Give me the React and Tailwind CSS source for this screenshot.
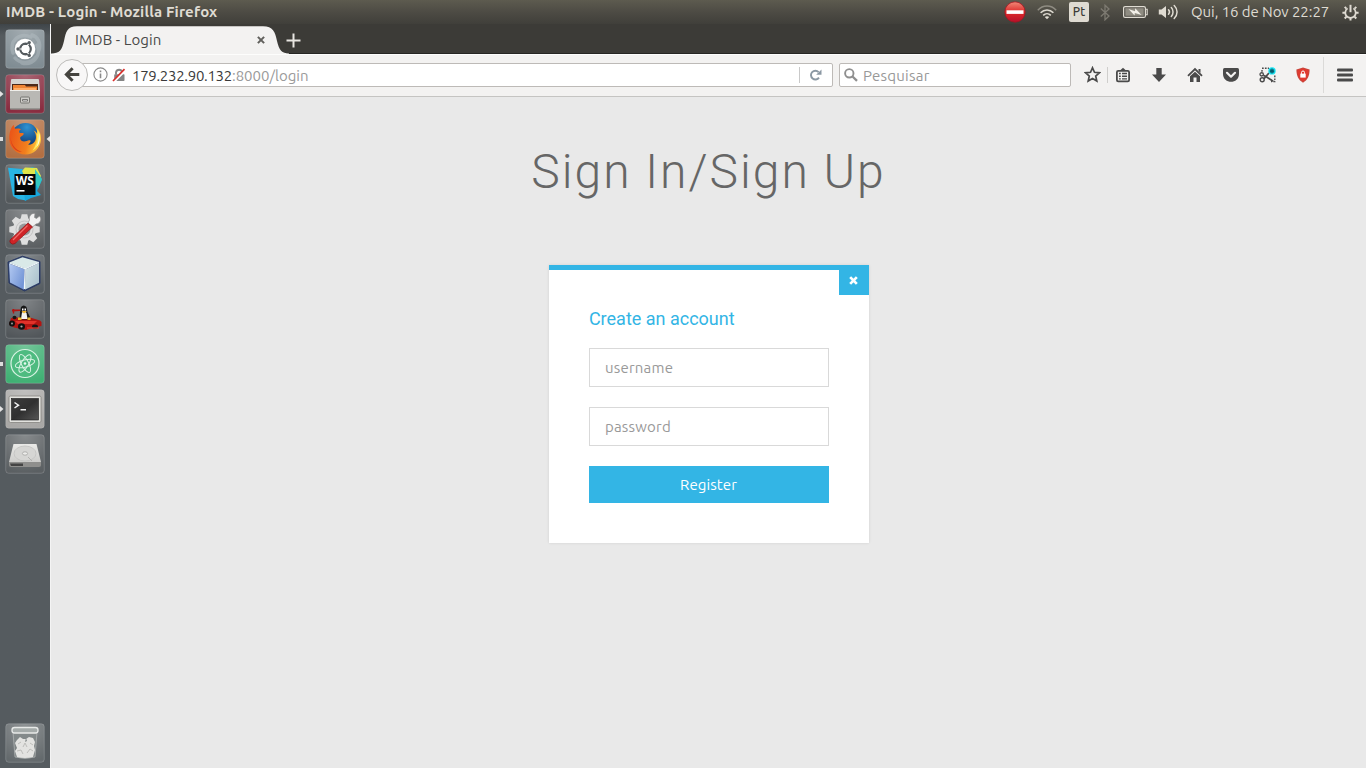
import React from "react";

const UI = "font-['Ubuntu','Noto_Sans',sans-serif]";

/* ---------- Top panel ---------- */

function NoEntryIcon() {
  return (
    <svg width="22" height="22" viewBox="0 0 22 22">
      <defs>
        <linearGradient id="ne" x1="0" y1="0" x2="0" y2="1">
          <stop offset="0" stopColor="#f08a78" />
          <stop offset="0.5" stopColor="#dd2a2a" />
          <stop offset="1" stopColor="#b80f2a" />
        </linearGradient>
      </defs>
      <circle cx="11" cy="11" r="10.2" fill="url(#ne)" stroke="#a51522" strokeWidth="0.8" />
      <rect x="2.500" y="9.300" width="17" height="3.600" fill="#fff" />
    </svg>
  );
}

function WifiIcon() {
  return (
    <svg width="20" height="16" viewBox="0 0 20 16" fill="none" strokeLinecap="butt">
      <path d="M0.8 6.2C6 .6 14 .6 19.2 6.2" stroke="#8f8c82" strokeWidth="1.5" />
      <path d="M3.6 8.8C7.3 5 12.7 5 16.4 8.8" stroke="#dfdbd2" strokeWidth="1.6" />
      <path d="M6.2 11.3C8.4 9.2 11.6 9.2 13.8 11.3" stroke="#dfdbd2" strokeWidth="1.6" />
      <path d="M10 15.2L7.8 13C9 11.9 11 11.9 12.2 13Z" fill="#dfdbd2" />
    </svg>
  );
}

function BatteryIcon() {
  return (
    <svg width="25" height="14" viewBox="0 0 25 14">
      <rect x="0.600" y="1.600" width="21.800" height="10.800" rx="1.500" fill="none" stroke="#dfdbd2" strokeWidth="1.200" />
      <path d="M23 4.200h1.200v5.600h-1.200" fill="none" stroke="#dfdbd2" strokeWidth="1.100" />
      <rect x="2.300" y="3.200" width="18.400" height="7.600" fill="#8f8c82" />
      <path d="M5.500 4L12 6.200L12.200 3.200L18.500 10L11.800 8L11.600 10.600Z" fill="#f2efe8" />
    </svg>
  );
}

function VolumeIcon() {
  return (
    <svg width="21" height="16" viewBox="0 0 21 16" fill="none" stroke="#dfdbd2" strokeLinecap="round">
      <path d="M.8 5.400H3.500L8 2V14L3.500 10.600H.8Z" fill="#dfdbd2" stroke="none" />
      <path d="M10.500 5.800C11.600 7 11.600 9 10.500 10.200" strokeWidth="1.500" />
      <path d="M13.300 3.600C15.600 6 15.600 10 13.300 12.400" strokeWidth="1.500" />
      <path d="M16.200 1.500C20 5.200 20 10.800 16.200 14.500" strokeWidth="1.500" />
    </svg>
  );
}

function GearPowerIcon() {
  return (
    <svg width="17" height="17" viewBox="0 0 17 17" fill="none" stroke="#dfdbd2">
      <path
        d="M8.500 14V16.600M.4 8.800H3M14 8.800H16.600M2.700 2.900L4.400 4.600M12.600 12.800L14.300 14.500M2.700 14.500L4.400 12.800M12.600 4.600L14.300 2.900"
        strokeWidth="2"
      />
      <path d="M5.600 4.400A5.200 5.200 0 1 0 11.400 4.400" strokeWidth="1.700" />
      <path d="M8.500 .8V8.200" strokeWidth="2" />
    </svg>
  );
}

function TopPanel() {
  return (
    <header className={`${UI} flex h-6 shrink-0 items-center bg-linear-to-b from-[#5d5b4f] via-[#4d4b44] to-[#403f3a] text-[#dfdbd2]`}>
      <div className="ml-[6px] text-[15px] leading-6 font-bold tracking-[0.15px] whitespace-nowrap">
        IMDB - Login - Mozilla Firefox
      </div>
      <div className="ml-auto flex h-6 items-center">
        <NoEntryIcon />
        <div className="ml-[11px]"><WifiIcon /></div>
        <div className="ml-[12px] flex h-5 w-5 items-center justify-center rounded-[2px] bg-[#dfdbd2] text-[12px] font-medium text-[#3c3b37]">
          Pt
        </div>
        <svg className="ml-[11px]" width="10" height="17" viewBox="0 0 10 17" fill="none" stroke="#7d7a71" strokeWidth="1.300">
          <path d="M.8 4.500L9 12L5 15.800V1.200L9 5L.8 12.500" />
        </svg>
        <div className="ml-[13px]"><BatteryIcon /></div>
        <div className="ml-[10px]"><VolumeIcon /></div>
        <div className="ml-[12px] w-[139px] text-[15px] leading-6 tracking-[-0.07px] whitespace-nowrap">
          Qui, 16 de Nov 22:27
        </div>
        <div className="mr-[7px] ml-[12px]"><GearPowerIcon /></div>
      </div>
    </header>
  );
}

/* ---------- Launcher ---------- */

function Tile({ tint, children, left, right }) {
  return (
    <div className="relative flex h-10 w-[50px] shrink-0 items-center justify-center">
      {left === "arrow" && (
        <svg className="absolute top-[17px] left-0" width="4" height="6" viewBox="0 0 4 6"><path d="M0 0L3.500 3L0 6Z" fill="#e4e4e4" /></svg>
      )}
      {left === "bar" && <span className="absolute top-[18px] left-0 h-1 w-[3px] bg-[#dcdcdc]" />}
      {right && (
        <svg className="absolute top-[17px] right-0" width="4" height="6" viewBox="0 0 4 6"><path d="M4 0L.5 3L4 6Z" fill="#e4e4e4" /></svg>
      )}
      <svg width="40" height="40" viewBox="0 0 40 40">
        <rect x="0.750" y="0.750" width="38.500" height="38.500" rx="3" fill={tint} />
        <rect x="0.750" y="0.750" width="38.500" height="38.500" rx="3" fill="url(#gloss)" stroke="#fff" strokeOpacity="0.180" />
        {children}
      </svg>
    </div>
  );
}

function Launcher() {
  return (
    <aside className="flex w-[51px] shrink-0 flex-col gap-[5px] border-r border-[#f4f4f4] bg-linear-to-b from-[#3f4549] via-[#555b5f] via-[12px] to-[#555b5f] pt-[5px] pb-[5px]">
      <svg className="absolute h-0 w-0">
        <defs>
          <radialGradient id="gloss" cx="0.5" cy="0" r="1">
            <stop offset="0" stopColor="#fff" stopOpacity="0.300" />
            <stop offset="1" stopColor="#fff" stopOpacity="0.040" />
          </radialGradient>
        </defs>
      </svg>

      <Tile tint="#7b888f">
        <g fill="none" stroke="#b6c0c5" strokeWidth="3.500" opacity="0.450" strokeLinecap="round">
          <path d="M8 24C4 12 14 3 26 8" />
          <path d="M32 16C37 26 28 37 17 34" />
          <path d="M10 29C15 35 26 35 31 28" />
          <path d="M27 6C33 8 36 14 34 21" />
        </g>
        <circle cx="20" cy="20" r="10.300" fill="#fff" />
        <circle cx="20.500" cy="20" r="5.200" fill="none" stroke="#555b5f" strokeWidth="2.400" />
        <g stroke="#fff" strokeWidth="1.200">
          <path d="M20.500 20H11M20.500 20L25.500 11.500M20.500 20L25.500 28.500" />
        </g>
        <circle cx="20.500" cy="20" r="3.900" fill="#fff" />
        <circle cx="13" cy="20" r="1.700" fill="#555b5f" />
        <circle cx="24.200" cy="13.600" r="1.700" fill="#555b5f" />
        <circle cx="24.200" cy="26.400" r="1.700" fill="#555b5f" />
      </Tile>

      <Tile tint="#842438" left="arrow">
        <path d="M6 6Q6 5 7 5H33Q34 5 34 6L35 17H5Z" fill="#d5d4d0" />
        <path d="M7 10H33V17H7Z" fill="#4d2a1a" />
        <path d="M8 11H20L21 12.500H32V18H8Z" fill="#ef8534" />
        <path d="M9 14H31V18H9Z" fill="#ffae68" />
        <rect x="5" y="16" width="30" height="19.500" rx="1" fill="#b9b8b4" />
        <path d="M5 16.500H35" stroke="#efeeea" />
        <path d="M5 35H35" stroke="#73726e" />
        <rect x="15.500" y="23" width="9" height="6" rx="1" fill="#cfceca" stroke="#777672" />
        <path d="M17.500 25.500H22.500V27H17.500Z" fill="#f4f4f4" stroke="#5e5d5a" strokeWidth="0.800" />
      </Tile>

      <Tile tint="#b0693a" left="bar" right>
        <defs>
          <linearGradient id="fx" x1="0" y1="0.300" x2="1" y2="0.500">
            <stop offset="0" stopColor="#ea5418" />
            <stop offset="0.600" stopColor="#f27f1d" />
            <stop offset="1" stopColor="#ffcf3f" />
          </linearGradient>
          <radialGradient id="fxb" cx="0.550" cy="0.150" r="0.700">
            <stop offset="0" stopColor="#2f93d2" />
            <stop offset="1" stopColor="#0c2f6c" />
          </radialGradient>
        </defs>
        <circle cx="20.500" cy="18.500" r="14.500" fill="url(#fxb)" />
        <path
          d="M5.500 11C6.500 8 8 6.500 9 6C8.800 8 9.500 9 10.500 9.800C12.500 9 15 9.500 16.200 10.300C14.500 11 13.800 12 14.300 13.800C15.500 14.300 17.500 13.800 18.800 14.500C19 16 16.500 17 15.500 18C14.500 19.500 16 22.500 19 22.500C21.500 22.500 23 20.700 25 21.300C26.200 21.700 25.500 24 23 25.500C27.500 26.500 31 22.500 31 18C31 14.500 29.500 12.500 28.500 11.500C31 12.500 32 14 32.300 15C32.800 11.500 30.500 8 28 6C34 9 36.500 15 36 21C35.200 29.500 28.500 35.500 20.500 35.500C11.500 35.500 4.500 28.800 4.300 20C4.200 16.500 4.600 13.500 5.500 11Z"
          fill="url(#fx)"
        />
        <path d="M32.500 10C37 18 35 28 27.500 31.500C31.500 26 33 20 31.500 14.500L32.300 15Z" fill="#ffe95f" />
        <path d="M34 13C36 20 34.500 25 31.500 28C33.500 23 34 19 34 13Z" fill="#fffbd6" />
        <path d="M5.500 18C6 26 11 31 17 33C10.500 33 5.500 27 5.500 18Z" fill="#d9401c" />
      </Tile>

      <Tile tint="#4c5154">
        <path d="M3 3.700L17 5L22 9L21 36.500L13 35L8 32Z" fill="#28b4e4" />
        <path d="M17 6L28 3L37 16L32 27L36 31L26 34L20 37Z" fill="#17a6dc" />
        <path d="M17 7L20 3.500L32 4L36 12L34 16L20 14Z" fill="#dfe64a" />
        <path d="M30 5L37 15L33 25L30 18Z" fill="#34c7c0" />
        <rect x="9.500" y="10" width="21" height="21" fill="#050505" />
        <text x="10.700" y="20.800" fontFamily="Noto Sans" fontWeight="700" fontSize="11.500" textLength="18" lengthAdjust="spacingAndGlyphs" fill="#fff">WS</text>
        <rect x="11.500" y="26" width="8" height="1.600" fill="#fff" />
      </Tile>

      <Tile tint="#55595c">
        <g transform="translate(19.500 20.500)">
          <circle r="11.500" fill="#dedede" />
          <g fill="#dedede">
            {[0, 45, 90, 135, 180, 225, 270, 315].map((a) => (
              <path key={a} d="M-4 -10L-2.800 -15.200H2.800L4 -10Z" transform={`rotate(${a})`} />
            ))}
          </g>
          <circle r="6" fill="#96999a" />
          <circle r="8.500" fill="none" stroke="#c3c3c3" />
        </g>
        <path d="M24.500 11C23.500 7 26.500 3.800 30 4.500L29.500 8.500L31.500 9.500L34.500 7C37 10 35.500 14.500 31 15L27.500 18L23 14Z" fill="#f1f1f1" stroke="#8d8d8d" strokeWidth="0.700" />
        <path d="M23 14L27.500 18L10 34.500Q7.500 36 5.500 34Q4 32 5.500 30.500Z" fill="#cf2326" stroke="#8b1315" strokeWidth="0.700" />
        <path d="M22.500 16.500L8 31" stroke="#ef6c68" strokeWidth="1.300" />
      </Tile>

      <Tile tint="#4f565b">
        <defs>
          <linearGradient id="cubeL" x1="0" y1="0" x2="1" y2="0.600">
            <stop offset="0" stopColor="#b4caf2" />
            <stop offset="1" stopColor="#7395d6" />
          </linearGradient>
          <linearGradient id="cubeR" x1="0" y1="0" x2="1" y2="0.800">
            <stop offset="0" stopColor="#d2e2e6" />
            <stop offset="1" stopColor="#a9c0cc" />
          </linearGradient>
        </defs>
        <path d="M17.500 2.200L35 7.500V29.500L19.500 37L4 29L3 8Z" fill="#2c3c66" stroke="#2c3c66" strokeLinejoin="round" />
        <path d="M17.500 3.300L34 8L20.300 14.500L4.200 8.600Z" fill="#d9e9e8" />
        <path d="M4 9.500L19.600 15.300L19 35.700L5 28.400Z" fill="url(#cubeL)" />
        <path d="M20.700 15.300L34 9L34 28.800L19.800 35.700Z" fill="url(#cubeR)" />
        <path d="M4.500 9L20.200 14.800L33.800 8.400M20.200 14.800L19.400 35" stroke="#eef7fa" strokeWidth="1.300" fill="none" />
      </Tile>

      <Tile tint="#4b5054">
        <path d="M7 10.500H15V12L7 12.500Z" fill="#b21512" />
        <path d="M8.500 10V14.500" stroke="#b21512" strokeWidth="1.400" />
        <path d="M6 19L14 18.500H25L35 21.500L36.500 23V27L29 28.500L21 31L9 28.500L4 25.500Z" fill="#b21512" />
        <path d="M16 8Q18.500 5 21.500 8L22.500 13L25 18L23 20.500H14.500L15 13Z" fill="#171717" />
        <path d="M17 13.500Q19.500 12 21.500 14L22.500 20H16Z" fill="#f4f4f0" />
        <path d="M17 9.500H18.500V11.500H17ZM19.500 9.500H21V11.500H19.500Z" fill="#fff" />
        <path d="M16.500 12L22 12L19 14.500Z" fill="#f0b429" />
        <path d="M13 18.500H16.500V21H13ZM22.500 18.500H25.500V21H22.500Z" fill="#e8b32c" />
        <path d="M10 22L32 22L29 25L13 25Z" fill="#e3322a" />
        <ellipse cx="7" cy="24.500" rx="3" ry="3" fill="#111" />
        <ellipse cx="16.500" cy="27.500" rx="3.500" ry="3.300" fill="#111" />
        <ellipse cx="9.500" cy="18.500" rx="2" ry="1.800" fill="#161616" />
        <ellipse cx="30" cy="27.500" rx="3" ry="2" fill="#161616" />
        <path d="M22 29H34" stroke="#e3322a" strokeWidth="1.300" />
        <circle cx="16.500" cy="27.500" r="1.100" fill="#a7a7a7" />
        <circle cx="7" cy="24.500" r="0.900" fill="#a7a7a7" />
      </Tile>

      <Tile tint="#38ad6e" left="bar">
        <circle cx="20" cy="19.500" r="14" fill="#4ebb80" stroke="#d9f3e4" strokeWidth="1.200" />
        <g fill="none" stroke="#d9f3e4" strokeWidth="1">
          <ellipse cx="20" cy="19.500" rx="3.600" ry="10" transform="rotate(-28 20 19.500)" />
          <ellipse cx="20" cy="19.500" rx="3.600" ry="10" transform="rotate(32 20 19.500)" />
          <ellipse cx="20" cy="19.500" rx="3.600" ry="10" transform="rotate(75 20 19.500)" />
        </g>
        <circle cx="20" cy="19.500" r="1.300" fill="#e8faf0" />
      </Tile>

      <Tile tint="#a5a4a2" left="arrow">
        <defs>
          <linearGradient id="term" x1="0" y1="0" x2="1" y2="1">
            <stop offset="0" stopColor="#3c3c3c" />
            <stop offset="0.500" stopColor="#303030" />
            <stop offset="1" stopColor="#555" />
          </linearGradient>
        </defs>
        <rect x="4" y="7" width="32" height="26.500" rx="1.500" fill="#e2e2de" stroke="#85847f" strokeWidth="0.800" />
        <rect x="6.500" y="9.500" width="27" height="21.500" fill="url(#term)" stroke="#191919" strokeWidth="0.600" />
        <path d="M9.500 13.500L13.500 16.200L9.500 19M15.500 20.800H21" fill="none" stroke="#f4f4f4" strokeWidth="1.500" />
      </Tile>

      <Tile tint="#54595c">
        <defs>
          <linearGradient id="hdd" x1="0" y1="0" x2="0" y2="1">
            <stop offset="0" stopColor="#e9e9e7" />
            <stop offset="1" stopColor="#cdcdcb" />
          </linearGradient>
        </defs>
        <path d="M8.500 10H31.500L36 28H4Z" fill="url(#hdd)" />
        <path d="M4 28H36V31Q36 33 34 33H6Q4 33 4 31Z" fill="#8f8f8d" />
        <path d="M5 29.500H18V32H6Z" fill="#444" />
        <ellipse cx="20" cy="19.500" rx="11" ry="7.500" fill="#d6d6d4" stroke="#c2c2c0" strokeWidth="0.800" />
        <ellipse cx="20" cy="19.500" rx="2.600" ry="1.700" fill="#ededeb" stroke="#a5a5a3" strokeWidth="0.800" />
        <path d="M23 23L27 27" stroke="#b2b2b0" />
      </Tile>

      <div className="mt-auto">
        <Tile tint="#5e6467">
          <path d="M8 9L32 9L30 34Q20 37 10 34Z" fill="#868c8c" fillOpacity="0.650" stroke="#aeb3b2" strokeWidth="0.800" />
          <path d="M12 17L15 14L18 16L21 16L24 14L28 15L30 19L29 23L30 27L28 34Q20 36 12 34L10 28L12 25L10 20Z" fill="#e3e3e1" />
          <path d="M13 21L16 19M18 24L20 20L22 24M25 20L28 22M12 28L16 27L18 31M22 30L25 26L28 28" fill="none" stroke="#b9b9b6" strokeWidth="0.900" />
          <path d="M21 15L20 19L22 18Z" fill="#868c8c" />
          <rect x="7" y="4.500" width="26" height="5.500" rx="2.500" fill="#a5abaa" stroke="#e7e9e8" strokeWidth="1.300" />
        </Tile>
      </div>
    </aside>
  );
}

/* ---------- Browser chrome ---------- */

function TabStrip() {
  return (
    <div className="flex h-[30px] shrink-0 border-b border-[#262623] bg-[#3c3b37]">
      <div className="relative h-[30px] w-[238px]">
        <svg className="absolute inset-0" width="238" height="30" viewBox="0 0 238 30">
          <path d="M0 30V29.500C8.500 29.500 11 26 13 17C15 8 16 2.300 26 2.300H212C222 2.300 224 8 226 17C228 26 231 29.500 238 29.500V30Z" fill="#f3f2f1" />
        </svg>
        <div className="relative flex h-full items-center pt-px">
          <span className="ml-[24px] text-[15px] leading-none tracking-[0.08px] text-[#4a4a48]">IMDB - Login</span>
          <svg className="absolute left-[206px]" width="8" height="8" viewBox="0 0 9 9" stroke="#61605d" strokeWidth="2.300">
            <path d="M1 1L8 8M8 1L1 8" />
          </svg>
        </div>
      </div>
      <svg className="mt-[9px] ml-[-3px]" width="15" height="15" viewBox="0 0 15 15" fill="#e8e6e1">
        <path d="M6.500 .5H8.500V6.500H14.500V8.500H8.500V14.500H6.500V8.500H.5V6.500H6.500Z" />
      </svg>
    </div>
  );
}

function Cell({ children, className }) {
  return <div className={`flex h-6 items-center justify-center ${className}`}>{children}</div>;
}

function NavBar() {
  return (
    <div className="flex h-[43px] shrink-0 items-center border-t border-b border-t-[#fdfdfc] border-b-[#c5c4c2] bg-[#f3f2f1] pb-[2px]">
      <div className="relative z-10 ml-[5px] flex h-8 w-8 items-center justify-center rounded-full border border-[#bdbcba] bg-[#f8f7f7]">
        <svg width="16" height="15" viewBox="0 0 16 15" fill="none" stroke="#45443f" strokeWidth="3">
          <path d="M8.600 1.300L2.400 7.500L8.600 13.700M2.500 7.500H15.300" />
        </svg>
      </div>
      <div className="-ml-4 flex h-6 w-[761px] items-center rounded-[2px] border border-[#bdbab7] bg-white">
        <svg className="ml-[20px]" width="15" height="15" viewBox="0 0 15 15" fill="none" stroke="#8a8a8a">
          <circle cx="7.500" cy="7.500" r="6.600" strokeWidth="1.100" />
          <path d="M7.500 6.500V11.200M7.500 3.500V5.200" strokeWidth="1.600" />
        </svg>
        <svg className="ml-[4px]" width="14" height="14" viewBox="0 0 14 14">
          <path d="M4 6.500V4.200A3.200 3.200 0 0 1 10.200 4.200V6.500" fill="none" stroke="#858585" strokeWidth="1.900" />
          <rect x="2.200" y="6.200" width="10.300" height="6.800" rx="0.800" fill="#858585" />
          <path d="M2 13.500L13.500 2" stroke="#fff" strokeWidth="2.600" />
          <path d="M1 13L12.500 1.200" stroke="#d9302c" strokeWidth="1.700" />
        </svg>
        <div className="ml-[6px] pt-px text-[15px] leading-none whitespace-nowrap text-[#9a9a9a]">
          <span className="tracking-[-0.300px] text-[#3a3a3a]">179.232.90.132</span>:8000/login
        </div>
        <div className="ml-auto h-4 w-px bg-[#c9c9c9]" />
        <svg className="mr-[10px] ml-[10px]" width="12" height="12" viewBox="0 0 12 12">
          <path d="M9 8.600A4.400 4.400 0 1 1 8.600 3.100" fill="none" stroke="#8b98a3" strokeWidth="1.900" />
          <path d="M11.500 .5V5.800H6.200Z" fill="#8b98a3" />
        </svg>
      </div>
      <div className="ml-[6px] flex h-6 w-[232px] items-center rounded-[2px] border border-[#bdbab7] bg-white">
        <svg className="ml-[4px]" width="14" height="14" viewBox="0 0 14 14" fill="none" stroke="#8f8f8f">
          <circle cx="5.300" cy="5.300" r="4.200" strokeWidth="1.900" />
          <path d="M8.500 8.500L13 12.800" strokeWidth="2.400" />
        </svg>
        <span className="ml-[5px] pt-px text-[15px] leading-none tracking-[0.250px] text-[#989898]">Pesquisar</span>
      </div>

      <Cell className="ml-[6px] w-[30px]">
        <svg width="17" height="17" viewBox="0 0 17 17">
          <path d="M8.500 1.800L10.500 6.300L15.400 6.800L11.700 10L12.800 15L8.500 12.400L4.200 15L5.300 10L1.600 6.800L6.500 6.300Z" fill="none" stroke="#4a4a4a" strokeWidth="1.700" />
        </svg>
      </Cell>
      <div className="h-4 w-px bg-[#cfcecc]" />
      <Cell className="w-[30px]">
        <svg width="16" height="16" viewBox="0 0 16 16">
          <path d="M5 3.500L8 .8L11 3.500Z" fill="#4a4a4a" />
          <rect x="1.900" y="3.900" width="12.200" height="10.500" rx="1.300" fill="none" stroke="#4a4a4a" strokeWidth="1.800" />
          <path d="M4 6.500H5.800M7 6.500H12M4 9.200H5.800M7 9.200H12M4 11.900H5.800M7 11.900H12" stroke="#4a4a4a" strokeWidth="1.400" />
        </svg>
      </Cell>
      <Cell className="ml-[3px] w-9">
        <svg width="16" height="16" viewBox="0 0 16 16"><path d="M5.300 1H10.700V7.500H15L8 15L1 7.500H5.300Z" fill="#4a4a4a" /></svg>
      </Cell>
      <Cell className="w-9">
        <svg width="16" height="16" viewBox="0 0 16 16">
          <path d="M1 8.800L8 2L15 8.800" fill="none" stroke="#4a4a4a" strokeWidth="1.800" />
          <path d="M3 9.300L8 4.700L13 9.300V15H9.500V10.500H6.500V15H3ZM11.500 2H13.500V6L11.500 4Z" fill="#4a4a4a" />
        </svg>
      </Cell>
      <Cell className="w-9">
        <svg width="16" height="16" viewBox="0 0 16 16">
          <path d="M1.500 1H14.500Q16 1 16 2.500V7C16 12 12 14.800 8 14.800S0 12 0 7V2.500Q0 1 1.500 1Z" fill="#4a4a4a" />
          <path d="M4 5.800L8 9.700L12 5.800" fill="none" stroke="#f3f2f1" strokeWidth="2.200" strokeLinecap="round" strokeLinejoin="round" />
        </svg>
      </Cell>
      <Cell className="w-9">
        <svg width="17" height="16" viewBox="0 0 17 16" fill="none" stroke="#4a4a4a">
          <path d="M3 1.300H10M3 3V6.500M15.800 8.500V14.500H12" strokeWidth="1.400" strokeDasharray="1.700 1.200" />
          <circle cx="2.700" cy="7.300" r="1.700" strokeWidth="1.300" />
          <circle cx="3.200" cy="12.800" r="2" strokeWidth="1.400" />
          <path d="M4.800 11.800L10 6M4.300 8.200L8 10.200L14 14.200" strokeWidth="1.800" />
          <circle cx="13" cy="3.900" r="3.700" fill="#18e4f2" stroke="none" />
          <path d="M13 1.400V6.400M10.800 2.700L15.200 5.100M15.200 2.700L10.800 5.100" stroke="#075a6b" strokeWidth="1.300" />
        </svg>
      </Cell>
      <Cell className="w-9">
        <svg width="14" height="16" viewBox="0 0 14 16">
          <path d="M7 .4L13.600 2.500C13.600 9 11.500 13 7 15.700C2.500 13 .4 9 .4 2.500Z" fill="#c9463c" />
          <path d="M7 1.400L12.600 3.200C12.400 8.500 10.700 12 7 14.500C3.300 12 1.600 8.500 1.400 3.200Z" fill="#e03a30" />
          <rect x="4.300" y="6.600" width="5.400" height="4" fill="#fff" />
          <path d="M5.500 6.800V5.500A1.500 1.500 0 0 1 8.500 5.500V6.800" fill="none" stroke="#fff" strokeWidth="1" />
        </svg>
      </Cell>
      <div className="ml-[2px] h-9 w-px bg-[#dbdad8]" />
      <Cell className="w-[42px]">
        <svg width="16" height="14" viewBox="0 0 16 14" fill="#4a4a4a">
          <rect y="0.500" width="16" height="3" rx="1" />
          <rect y="5.500" width="16" height="3" rx="1" />
          <rect y="10.500" width="16" height="3" rx="1" />
        </svg>
      </Cell>
    </div>
  );
}

/* ---------- Page ---------- */

function Field({ placeholder, type }) {
  return (
    <input
      type={type}
      placeholder={placeholder}
      className="mb-5 block h-[39px] w-full border border-[#d9d9d9] bg-white pr-[15px] pl-[15.400px] text-[15px] tracking-[0.220px] text-[#666] outline-none placeholder:text-[#999]"
    />
  );
}

function LoginPage() {
  return (
    <main className="flex flex-1 flex-col items-center bg-[#e9e9e9]">
      <h1 className="mt-[47px] font-['Roboto',sans-serif] text-[48px] leading-[56px] font-light tracking-[2px] text-[#666]">
        Sign In/Sign Up
      </h1>
      <section className="relative mt-[65px] h-[278px] w-[320px] border-t-[5px] border-[#33b5e5] bg-white px-10 pt-[38px] shadow-[0_0_3px_rgba(0,0,0,0.1)]">
        <button aria-label="Close" className="absolute -top-[5px] right-0 flex h-[30px] w-[30px] items-center justify-center bg-[#33b5e5]">
          <svg width="9" height="9" viewBox="0 0 10 10" stroke="#fff" strokeWidth="3"><path d="M1.300 1.300L8.700 8.700M8.700 1.300L1.300 8.700" /></svg>
        </button>
        <h2 className="mb-[19px] pl-[0.400px] font-['Roboto',sans-serif] text-[18px] leading-[21px] text-[#33b5e5]">Create an account</h2>
        <Field placeholder="username" type="text" />
        <Field placeholder="password" type="password" />
        <button className="block h-[37px] w-full bg-[#33b5e5] pt-[2px] text-[15px] tracking-[0.100px] text-white">Register</button>
      </section>
    </main>
  );
}

export default function App() {
  return (
    <div className={`${UI} flex h-[768px] w-[1366px] flex-col overflow-hidden`}>
      <TopPanel />
      <div className="flex min-h-0 flex-1">
        <Launcher />
        <div className="flex min-w-0 flex-1 flex-col">
          <TabStrip />
          <NavBar />
          <LoginPage />
        </div>
      </div>
    </div>
  );
}
